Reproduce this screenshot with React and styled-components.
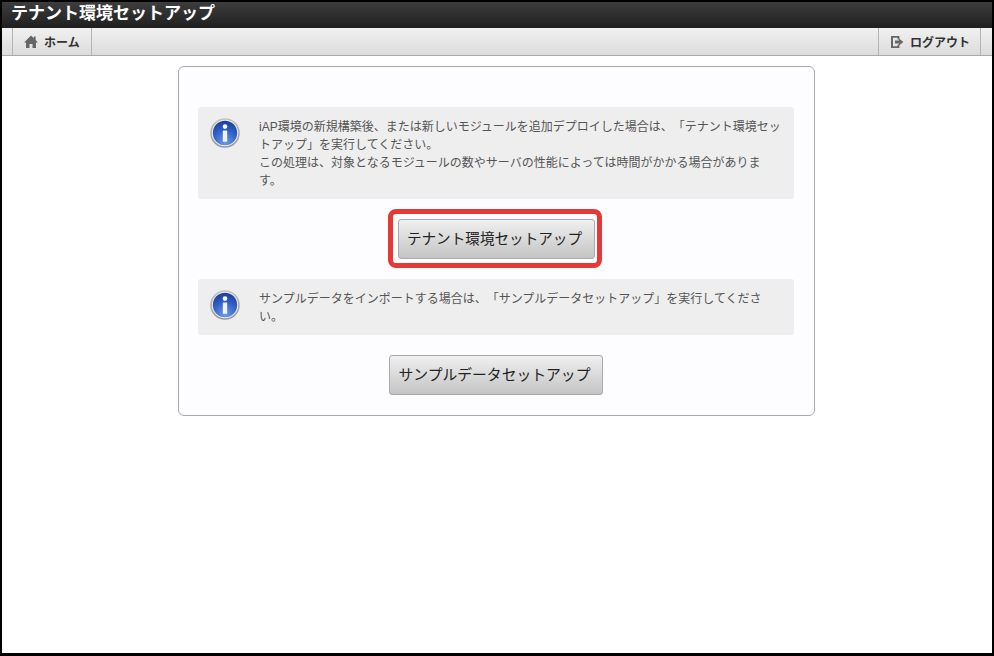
import React from "react";
import styled, { createGlobalStyle } from "styled-components";

const Global = createGlobalStyle`
  html, body { margin: 0; padding: 0; background: #fff; }
  body { font-family: "Liberation Sans", "Noto Sans CJK JP", sans-serif; text-spacing-trim: space-all; }
`;

const Frame = styled.div`
  box-sizing: border-box;
  width: 994px;
  height: 656px;
  border: solid #000;
  border-width: 2px 2px 3px 2px;
  background: #fff;
  display: flex;
  flex-direction: column;
`;

const TitleBar = styled.header`
  height: 26px;
  background: linear-gradient(#3d3d3d, #1f1f1f);
  color: #fff;
  font-size: 17px;
  font-weight: 700;
  line-height: 24px;
  padding-left: 9px;
`;

const NavBar = styled.nav`
  box-sizing: border-box;
  height: 28px;
  padding: 0 11px 0 10px;
  display: flex;
  justify-content: space-between;
  background: linear-gradient(#f1f1f1, #dcdcdc);
  border-bottom: 1px solid #aaa;
`;

const NavItem = styled.a`
  box-sizing: border-box;
  width: ${p => p.$width}px;
  display: flex;
  align-items: center;
  gap: 6px;
  padding-left: ${p => p.$pad}px;
  border: solid #b4b4b4;
  border-width: 0 1px;
  color: #333;
  font-size: 12px;
  font-weight: 700;
`;

const Main = styled.main`
  flex: 1;
  display: flex;
  justify-content: center;
  align-items: flex-start;
  padding: 10px 1px 0 0;
`;

const Card = styled.section`
  box-sizing: border-box;
  width: 637px;
  height: 350px;
  padding: 40px 20px 0 19px;
  border: 1px solid #aaa;
  border-radius: 6px;
  background: #fdfdff;
  display: flex;
  flex-direction: column;
  align-items: center;
  gap: 20px;
`;

const Info = styled.div`
  box-sizing: border-box;
  width: 100%;
  display: flex;
  gap: 19px;
  padding: 11px 11px 9px 12px;
  border-radius: 3px;
  background: #eee;
  color: #555;
  font-size: 12px;
  line-height: 18px;
`;

const InfoIconWrap = styled.div`
  flex: none;
  width: 30px;
  height: 30px;
`;

const InfoText = styled.p`
  margin: 0;
  flex: 1;
`;

const ButtonWrap = styled.div`
  position: relative;
  display: flex;
`;

const Highlight = styled.span`
  position: absolute;
  inset: -10px -7px -9px -10px;
  border: 5px solid #e53935;
  border-radius: 8px;
  pointer-events: none;
`;

const Button = styled.button`
  box-sizing: border-box;
  width: ${p => p.$width}px;
  height: 40px;
  padding: 0 3px 3px 0;
  border: 1px solid #aaa;
  border-radius: 3px;
  background: linear-gradient(#f0f0f0, #c4c4c4);
  color: #222;
  font-family: inherit;
  font-size: ${p => p.$size}px;
  white-space: nowrap;
`;

const HomeIcon = () => (
  <svg width="14" height="14" viewBox="0 0 14 14" aria-hidden="true">
    <path fill="#666" d="M7 0.6 L9.8 3.2 V1.4 H11.6 V4.9 L14 7.4 H12 V13 H8.5 V9 H5.5 V13 H2 V7.4 H0 Z" />
  </svg>
);

const LogoutIcon = () => (
  <svg width="14" height="14" viewBox="0 0 14 14" aria-hidden="true">
    <path fill="#666" d="M1 1 H9.4 V4.6 H7.6 V2.8 H3 V11.2 H7.6 V9.4 H9.4 V13 H1 Z" />
    <path fill="#666" d="M5 5.6 H9 V3.6 L13.4 7 L9 10.4 V8.4 H5 Z" />
  </svg>
);

const InfoIcon = ({ id }) => (
  <svg width="30" height="30" viewBox="0 0 30 30" aria-hidden="true">
    <defs>
      <linearGradient id={`${id}r`} x1="0" y1="0" x2="0" y2="1">
        <stop offset="0" stopColor="#c4c4c4" />
        <stop offset="1" stopColor="#999" />
      </linearGradient>
      <radialGradient id={`${id}b`} cx="0.5" cy="0.9" r="0.85">
        <stop offset="0" stopColor="#6f9ae8" />
        <stop offset="0.6" stopColor="#3061c8" />
        <stop offset="1" stopColor="#1f439f" />
      </radialGradient>
    </defs>
    <circle cx="15" cy="15" r="14.8" fill={`url(#${id}r)`} />
    <circle cx="15" cy="15" r="13.2" fill="#efefef" />
    <circle cx="15" cy="15" r="12.2" fill={`url(#${id}b)`} />
    <circle cx="15" cy="8.6" r="2.3" fill="#fff" />
    <rect x="12.8" y="12.4" width="4.4" height="11.4" rx="0.6" fill="#eef2fb" />
  </svg>
);

export default function App() {
  return (
    <>
      <Global />
      <Frame>
        <TitleBar>テナント環境セットアップ</TitleBar>
        <NavBar>
          <NavItem $width={80} $pad={11}><HomeIcon />ホーム</NavItem>
          <NavItem $width={103} $pad={11}><LogoutIcon />ログアウト</NavItem>
        </NavBar>
        <Main>
          <Card>
            <Info>
              <InfoIconWrap><InfoIcon id="a" /></InfoIconWrap>
              <InfoText>
                iAP環境の新規構築後、または新しいモジュールを追加デプロイした場合は、「テナント環境セットアップ」を実行してください。<br />
                この処理は、対象となるモジュールの数やサーバの性能によっては時間がかかる場合があります。
              </InfoText>
            </Info>
            <ButtonWrap>
              <Button $width={197} $size={14.6}>テナント環境セットアップ</Button>
              <Highlight />
            </ButtonWrap>
            <Info>
              <InfoIconWrap><InfoIcon id="b" /></InfoIconWrap>
              <InfoText>
                サンプルデータをインポートする場合は、「サンプルデータセットアップ」を実行してください。
              </InfoText>
            </Info>
            <ButtonWrap>
              <Button $width={214} $size={14.8}>サンプルデータセットアップ</Button>
            </ButtonWrap>
          </Card>
        </Main>
      </Frame>
    </>
  );
}
